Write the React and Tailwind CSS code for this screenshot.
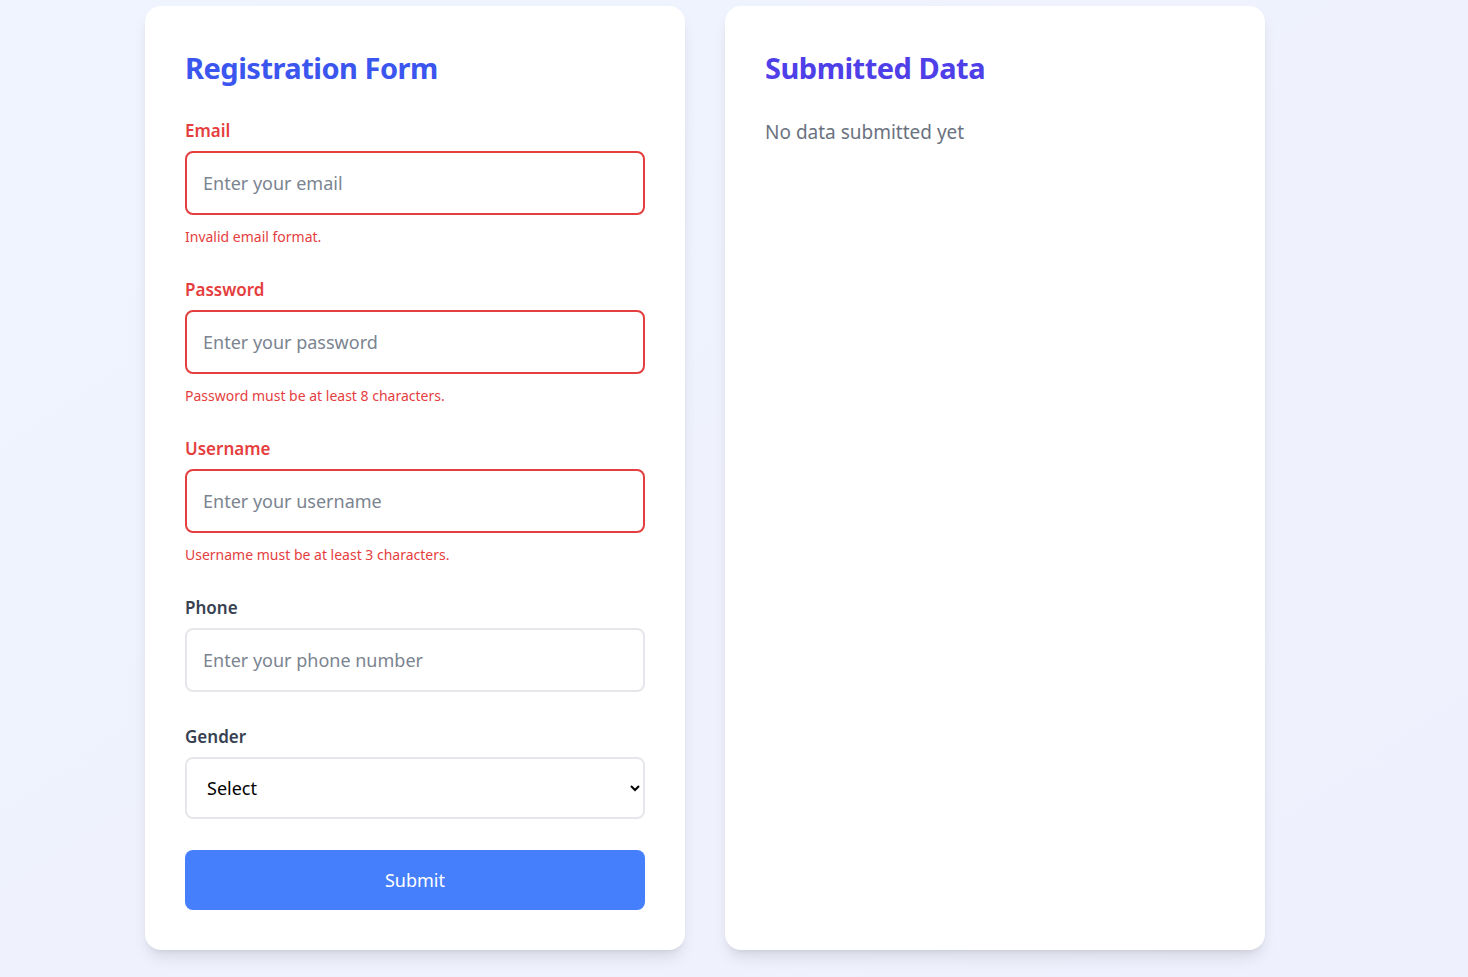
import React, { useState } from 'react'

const Field = ({ label, placeholder, error, type = 'text' }) => (
  <div className="flex flex-col">
    <label className={`text-[17px] font-semibold leading-6 mb-2 ${error ? 'text-[#e53e3e]' : 'text-[#374151]'}`}>
      {label}
    </label>
    <input
      type={type}
      placeholder={placeholder}
      className={`w-full h-[64px] px-4 rounded-lg border-2 text-lg text-gray-800 placeholder:text-[#7b8490] outline-none bg-white ${
        error ? 'border-[#e53e3e]' : 'border-[#e5e7eb]'
      }`}
    />
    {error && <p className="mt-3 text-sm leading-5 text-[#e53e3e]">{error}</p>}
  </div>
)

const App = () => {
  const [gender, setGender] = useState('')

  return (
    <div
      className="min-h-screen w-full bg-gradient-to-br from-[#eff4fe] to-[#eff0fd] pt-[6px] pb-[27px]"
      style={{ fontFamily: '"Noto Sans", "Open Sans", sans-serif' }}
    >
      <div className="flex gap-10 pl-[145px]">
        {/* Form card */}
        <div className="w-[540px] bg-white rounded-2xl shadow-lg p-10">
          <h1 className="text-[29px] font-bold leading-9 text-[#3a56ef] mt-1 mb-[33px] tracking-[-0.5px]">Registration Form</h1>
          <form className="flex flex-col gap-[31px]" onSubmit={(e) => e.preventDefault()}>
            <Field label="Email" placeholder="Enter your email" error="Invalid email format." />
            <Field label="Password" placeholder="Enter your password" type="password" error="Password must be at least 8 characters." />
            <Field label="Username" placeholder="Enter your username" error="Username must be at least 3 characters." />
            <Field label="Phone" placeholder="Enter your phone number" />
            <div className="flex flex-col mt-[2px]">
              <label className="text-[17px] font-semibold leading-6 mb-2 text-[#374151]">Gender</label>
              <select
                value={gender}
                onChange={(e) => setGender(e.target.value)}
                className="w-full h-[62px] pl-4 pr-3 rounded-lg border-2 border-[#e5e7eb] text-lg text-black bg-white outline-none"
              >
                <option value="">Select</option>
                <option value="male">Male</option>
                <option value="female">Female</option>
                <option value="other">Other</option>
              </select>
            </div>
            <button
              type="submit"
              className="w-full h-[60px] rounded-lg bg-[#467ffc] text-white text-lg"
            >
              Submit
            </button>
          </form>
        </div>

        {/* Submitted data card */}
        <div className="w-[540px] bg-white rounded-2xl shadow-lg p-10">
          <h2 className="text-[29px] font-bold leading-9 text-[#4f3fe8] mt-1 mb-8 tracking-[-0.5px]">Submitted Data</h2>
          <p className="text-[19px] text-[#6b7280]">No data submitted yet</p>
        </div>
      </div>
    </div>
  )
}

export default App
